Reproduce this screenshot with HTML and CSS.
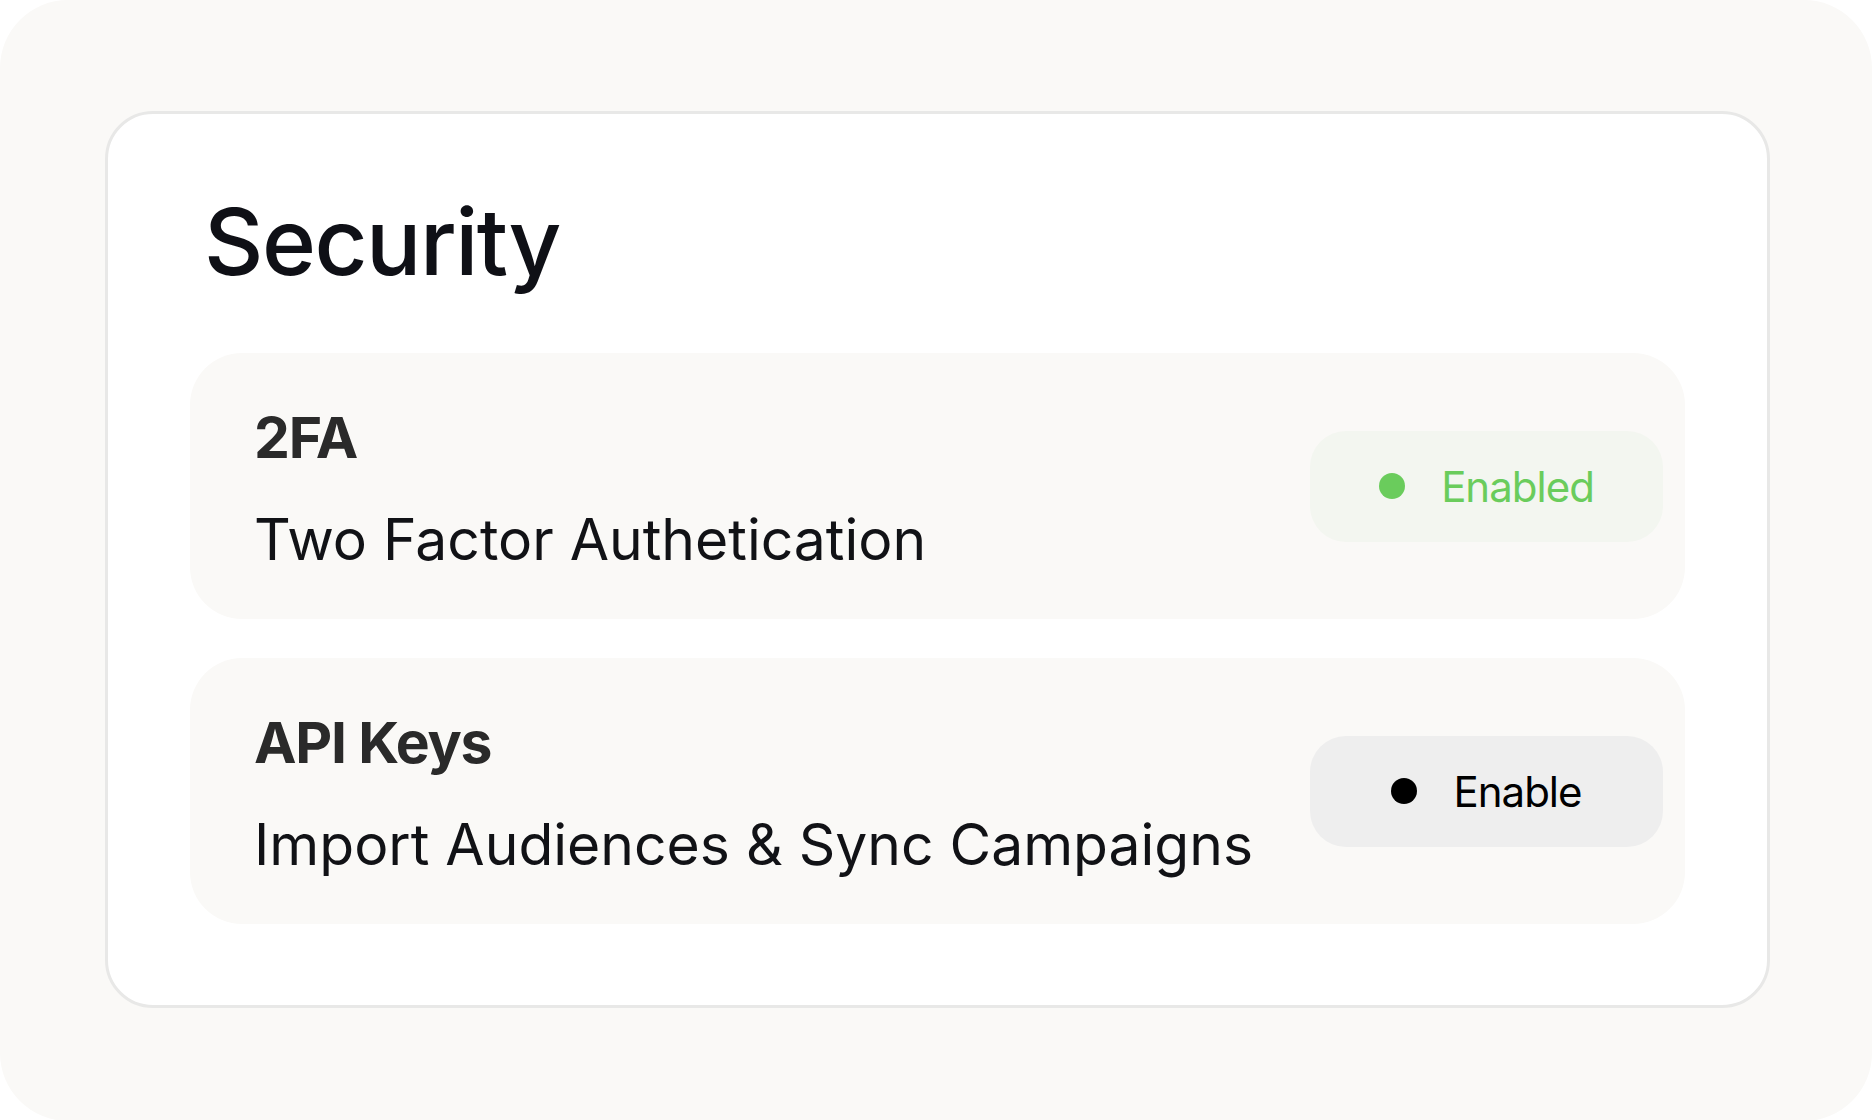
FILE: index.html
```
<!DOCTYPE html>
<html lang="en">
<head>
    <meta charset="UTF-8">
    <meta name="viewport" content="width=device-width, initial-scale=1.0">
    <title>Security</title>
    <link rel="stylesheet" href="styles.css">
</head>
<body>
    <div class="frame">
        <div class="card">
            <h1>Security</h1>

            <div class="setting">
                <div class="setting-text">
                    <div class="setting-name">2FA</div>
                    <div class="setting-desc">Two Factor Authetication</div>
                </div>
                <div class="pill pill-on">
                    <span class="dot"></span>
                    <span>Enabled</span>
                </div>
            </div>

            <div class="setting">
                <div class="setting-text">
                    <div class="setting-name">API Keys</div>
                    <div class="setting-desc">Import Audiences &amp; Sync Campaigns</div>
                </div>
                <div class="pill pill-off">
                    <span class="dot"></span>
                    <span>Enable</span>
                </div>
            </div>
        </div>
    </div>
</body>
</html>
```

FILE: styles.css
```
:root {
    --frame-bg: #faf9f7;
    --row-bg: #faf9f7;
    --border-color: #e8e8e7;
    --green: #6acc5c;
    --text-dark: #0f1016;
}

* {
    box-sizing: border-box;
}

body {
    margin: 0;
    background: #ffffff;
    font-family: 'Inter', 'Noto Sans', sans-serif;
    color: var(--text-dark);
}

.frame {
    min-height: 100vh;
    background: var(--frame-bg);
    border-radius: 68px;
    padding: 111px 102px 113px 105px;
}

.card {
    background: #ffffff;
    border: 3px solid var(--border-color);
    border-radius: 48px;
    padding: 72px 82px 81px 82px;
}

h1 {
    margin: 0 0 56px 14px;
    font-size: 92px;
    font-weight: 500;
    line-height: 111px;
    letter-spacing: -1.5px;
    color: var(--text-dark);
}

.setting {
    display: flex;
    align-items: center;
    justify-content: space-between;
    background: var(--row-bg);
    border-radius: 52px;
    padding: 0 22px 0 64px;
    height: 266px;
}

.setting + .setting {
    margin-top: 39px;
}

.setting-text {
    margin-top: 5px;
}

.setting-name {
    font-size: 57px;
    font-weight: 700;
    line-height: 68px;
    letter-spacing: -1.2px;
    color: #2a2a2a;
}

.setting-desc {
    margin-top: 34px;
    font-size: 57px;
    font-weight: 400;
    line-height: 68px;
    letter-spacing: 0;
    color: #111216;
}

.pill {
    width: 353px;
    height: 111px;
    border-radius: 36px;
    display: flex;
    align-items: center;
    justify-content: center;
    gap: 36px;
    font-size: 42px;
    letter-spacing: -1px;
}

.dot {
    width: 26px;
    height: 26px;
    border-radius: 50%;
    background: currentColor;
}

.pill-on {
    background: #f3f6f0;
    color: var(--green);
}

.pill-off {
    background: #eeeeee;
    color: #000000;
}
```
